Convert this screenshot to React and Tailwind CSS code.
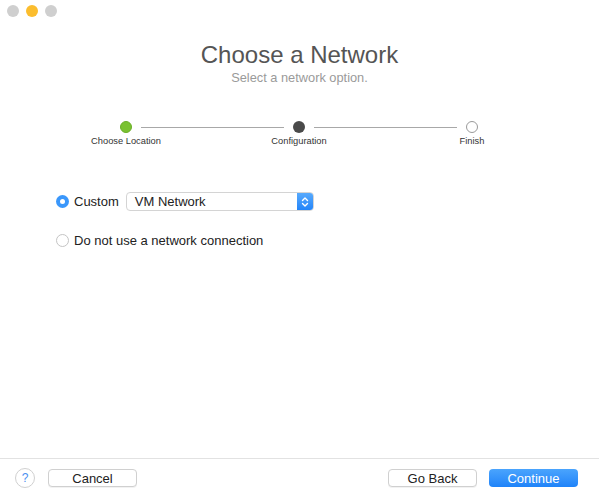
import React from 'react';

const steps = ['Choose Location', 'Configuration', 'Finish'];

function StepDot({ state }) {
  if (state === 'done') return <div className="w-3 h-3 rounded-full bg-[#7ac231] border border-[#6aae27] shrink-0" />;
  if (state === 'current') return <div className="w-3 h-3 rounded-full bg-[#4a4a4a] shrink-0" />;
  return <div className="w-3 h-3 rounded-full bg-white border border-[#9a9a9a] shrink-0" />;
}

function Button({ children, primary }) {
  if (primary) {
    return (
      <button className="w-[89px] h-[18px] rounded-[4px] bg-gradient-to-b from-[#4aa4fd] to-[#1e83f9] text-white text-[13px] leading-none flex items-center justify-center">
        {children}
      </button>
    );
  }
  return (
    <button className="w-[89px] h-[18px] rounded-[4px] bg-white border border-[#d0d0d0] shadow-[0_1px_0_rgba(0,0,0,0.05)] text-[#222] text-[13px] leading-none flex items-center justify-center">
      {children}
    </button>
  );
}

export default function App() {
  return (
    <div className="w-[599px] h-[499px] bg-white flex flex-col font-['Liberation_Sans',Arial,sans-serif] overflow-hidden">
      {/* Title bar */}
      <div className="flex gap-[7px] pl-[7px] pt-[5px]">
        <div className="w-3 h-3 rounded-full bg-[#cfcfcf]" />
        <div className="w-3 h-3 rounded-full bg-[#fbbd2e]" />
        <div className="w-3 h-3 rounded-full bg-[#cfcfcf]" />
      </div>

      {/* Header */}
      <div className="flex flex-col items-center mt-[24px]">
        <h1 className="text-[24px] leading-[28px] text-[#555]">Choose a Network</h1>
        <p className="text-[12.8px] leading-[16px] text-[#9a9a9a] mt-[1px]">Select a network option.</p>
      </div>

      {/* Stepper */}
      <div className="ml-[120px] w-[358px] mt-[35px]">
        <div className="flex items-center">
          <StepDot state="done" />
          <div className="flex-1 h-px bg-[#a8a8a8] mx-[9px]" />
          <StepDot state="current" />
          <div className="flex-1 h-px bg-[#a8a8a8] mx-[9px]" />
          <StepDot state="todo" />
        </div>
        <div className="flex mt-[2px]">
          {steps.map((s, i) => (
            <React.Fragment key={s}>
              <div className="w-3 flex justify-center">
                <span className="whitespace-nowrap text-[9.3px] leading-[12px] text-[#333]">{s}</span>
              </div>
              {i < steps.length - 1 && <div className="flex-1 mx-[9px]" />}
            </React.Fragment>
          ))}
        </div>
      </div>

      {/* Options */}
      <div className="flex flex-col pl-[56px] mt-[45px]">
        <div className="flex items-center">
          <div className="w-[13px] h-[13px] rounded-full bg-[#3a97fb] flex items-center justify-center">
            <div className="w-[5px] h-[5px] rounded-full bg-white" />
          </div>
          <span className="ml-[5px] text-[13px] text-[#222]">Custom</span>
          <div className="ml-[7px] w-[188px] h-[19px] rounded-[4px] border border-[#d4d4d4] bg-white flex items-center overflow-hidden">
            <span className="flex-1 pl-[8px] text-[13px] text-[#222]">VM Network</span>
            <div className="w-[16px] h-full bg-gradient-to-b from-[#57aafd] to-[#2285f9] flex items-center justify-center">
              <svg width="8" height="12" viewBox="0 0 8 12" fill="none" stroke="white" strokeWidth="1.4" strokeLinecap="round" strokeLinejoin="round">
                <path d="M1.5 4.5 L4 2 L6.5 4.5" />
                <path d="M1.5 7.5 L4 10 L6.5 7.5" />
              </svg>
            </div>
          </div>
        </div>
        <div className="flex items-center mt-[19px]">
          <div className="w-[13px] h-[13px] rounded-full bg-white border border-[#c4c4c4]" />
          <span className="ml-[5px] text-[13px] text-[#222]">Do not use a network connection</span>
        </div>
      </div>

      <div className="flex-1" />

      {/* Footer */}
      <div className="border-t border-[#e2e2e2] h-[41px] flex items-center pl-[15px] pr-[21px] pb-[2px]">
        <div className="w-[20px] h-[20px] rounded-full border border-[#d0d0d0] bg-white flex items-center justify-center text-[12px] text-[#4a8ff0]">
          ?
        </div>
        <div className="ml-[13px]">
          <Button>Cancel</Button>
        </div>
        <div className="flex-1" />
        <Button>Go Back</Button>
        <div className="ml-[12px]">
          <Button primary>Continue</Button>
        </div>
      </div>
    </div>
  );
}
